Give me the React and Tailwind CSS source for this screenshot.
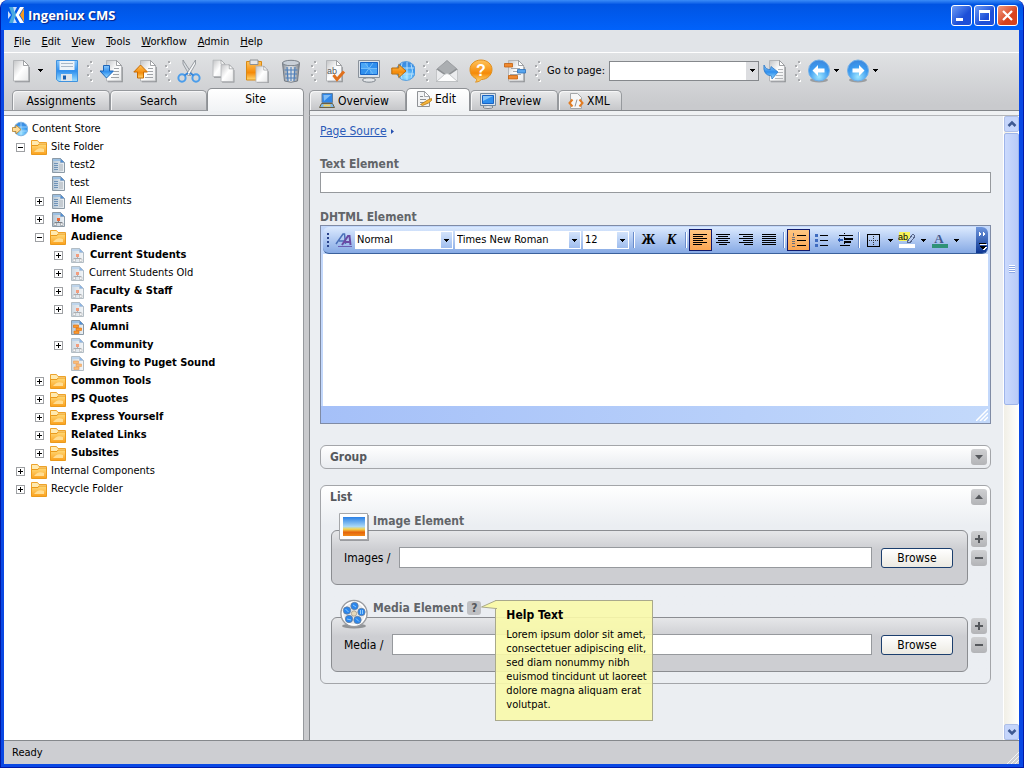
const menuItems = ["File", "Edit", "View", "Tools", "Workflow", "Admin", "Help"];

const treeItems = [
    { label: "Content Store", depth: 0, icon: "globe" },
    { label: "Site Folder", depth: 1, icon: "folder", toggle: "-" },
    { label: "test2", depth: 2, icon: "page" },
    { label: "test", depth: 2, icon: "page" },
    { label: "All Elements", depth: 2, icon: "page", toggle: "+" },
    { label: "Home", depth: 2, icon: "site", toggle: "+", bold: true },
    { label: "Audience", depth: 2, icon: "folder", toggle: "-", bold: true },
    { label: "Current Students", depth: 3, icon: "siteFaded", toggle: "+", bold: true },
    { label: "Current Students Old", depth: 3, icon: "siteFaded", toggle: "+" },
    { label: "Faculty & Staff", depth: 3, icon: "siteFaded", toggle: "+", bold: true },
    { label: "Parents", depth: 3, icon: "siteFaded", toggle: "+", bold: true },
    { label: "Alumni", depth: 3, icon: "component", bold: true },
    { label: "Community", depth: 3, icon: "siteFaded", toggle: "+", bold: true },
    { label: "Giving to Puget Sound", depth: 3, icon: "componentFaded", bold: true },
    { label: "Common Tools", depth: 2, icon: "folder", toggle: "+", bold: true },
    { label: "PS Quotes", depth: 2, icon: "folder", toggle: "+", bold: true },
    { label: "Express Yourself", depth: 2, icon: "folder", toggle: "+", bold: true },
    { label: "Related Links", depth: 2, icon: "folder", toggle: "+", bold: true },
    { label: "Subsites", depth: 2, icon: "folder", toggle: "+", bold: true },
    { label: "Internal Components", depth: 1, icon: "folder", toggle: "+" },
    { label: "Recycle Folder", depth: 1, icon: "folder", toggle: "+" },
];

const depthPadding = ["pl-2", "pl-3", "pl-[31px]", "pl-[50px]"];

// Gradients shared by all of the icons
const IconDefs = () => (
    <svg className="absolute h-0 w-0" aria-hidden="true">
        <defs>
            <linearGradient id="paper" x1="0" y1="0" x2="1" y2="1">
                <stop offset="0" stopColor="#c3c4c6" />
                <stop offset="0.5" stopColor="#ffffff" />
                <stop offset="1" stopColor="#e6e7e8" />
            </linearGradient>
            <linearGradient id="smallPaper" x1="0" y1="0" x2="1" y2="0">
                <stop offset="0" stopColor="#b5c6d4" />
                <stop offset="1" stopColor="#eef2f5" />
            </linearGradient>
            <linearGradient id="blue" x1="0" y1="0" x2="0" y2="1">
                <stop offset="0" stopColor="#8cc8fb" />
                <stop offset="0.5" stopColor="#2f8fee" />
                <stop offset="1" stopColor="#9fe0ff" />
            </linearGradient>
            <linearGradient id="orange" x1="0" y1="0" x2="0" y2="1">
                <stop offset="0" stopColor="#ffc45c" />
                <stop offset="0.6" stopColor="#f58a08" />
                <stop offset="1" stopColor="#ffd873" />
            </linearGradient>
            <linearGradient id="folder" x1="0" y1="0" x2="0" y2="1">
                <stop offset="0" stopColor="#ffdb7a" />
                <stop offset="1" stopColor="#fba01c" />
            </linearGradient>
            <linearGradient id="steel" x1="0" y1="0" x2="1" y2="0">
                <stop offset="0" stopColor="#8b929b" />
                <stop offset="0.5" stopColor="#eef1f4" />
                <stop offset="1" stopColor="#7b828b" />
            </linearGradient>
            <linearGradient id="sunset" x1="0" y1="0" x2="0" y2="1">
                <stop offset="0" stopColor="#2a80e6" />
                <stop offset="0.5" stopColor="#a9d8f5" />
                <stop offset="0.64" stopColor="#f5d64e" />
                <stop offset="0.8" stopColor="#e5650c" />
                <stop offset="1" stopColor="#f08a1a" />
            </linearGradient>
            <radialGradient id="ball" cx="0.5" cy="0.8" r="0.8">
                <stop offset="0" stopColor="#9fe6ff" />
                <stop offset="0.6" stopColor="#3b9bf0" />
                <stop offset="1" stopColor="#3c86dc" />
            </radialGradient>
        </defs>
    </svg>
);

const Svg24 = ({ children }) => (
    <svg viewBox="0 0 24 24" className="h-6 w-6 shrink-0" fill="none" aria-hidden="true">{children}</svg>
);

const Sheet = ({ x = 0, y = 0 }) => (
    <g transform={`translate(${x} ${y})`}>
        <path d="M3 3h9l6 5v15H3z" fill="#5d6064" opacity=".6" transform="translate(.8 .3)" />
        <path d="M2.500 1.500h10l5 5v15.500h-15z" fill="url(#paper)" stroke="#b4b6b9" />
        <path d="M12.500 1.500v5h5z" fill="#fff" stroke="#8a8d91" strokeWidth=".8" />
    </g>
);

const toolIcons = {
    new: <Sheet />,
    save: (
        <>
            <path d="M1.500 1.500h21v21H4l-2.500-2z" fill="url(#blue)" stroke="#3f92df" />
            <path d="M4.500 2h15v9h-15z" fill="#eef3f8" />
            <path d="M6 4.500h12M6 7.500h12" stroke="#a9b8c8" />
            <path d="M6 15h11v7H6z" fill="#dfe5ea" />
            <path d="M8 16.500h3v4H8z" fill="#1a5fae" />
        </>
    ),
    checkin: (
        <>
            <Sheet x={5} />
            <path d="M15 9.500h5M15 12.500h5M14 15.500h6M12 18.500h8" stroke="#a0a3a7" />
            <path d="M4.500 6.500h6v5.500h4l-7 7-6.500-7h3.500z" fill="url(#blue)" stroke="#1c65b8" />
        </>
    ),
    checkout: (
        <>
            <Sheet x={5} />
            <path d="M15 9.500h5M15 12.500h5M14 15.500h6M12 18.500h8" stroke="#a0a3a7" />
            <path d="M7.500 6l7 7h-4v6h-6v-6H.800z" fill="url(#orange)" stroke="#c86a00" />
        </>
    ),
    cut: (
        <>
            <path d="M6 1l9 14-2 2-7-12z" fill="#d9dde1" stroke="#858b92" strokeWidth=".8" />
            <path d="M18.500 1l-9 14 2 2 7-12z" fill="#f6f7f8" stroke="#858b92" strokeWidth=".8" />
            <ellipse cx="5" cy="19" rx="3.600" ry="3.800" stroke="#4a9deb" strokeWidth="2" />
            <ellipse cx="19" cy="19" rx="3.600" ry="3.800" stroke="#4a9deb" strokeWidth="2" />
            <path d="M7.500 16.500l3.500-2.500M16.500 16.500L13 14" stroke="#3987da" strokeWidth="2" />
        </>
    ),
    copy: (
        <>
            <g transform="scale(.8)"><Sheet /></g>
            <g transform="translate(8 4.500) scale(.82)"><Sheet /></g>
        </>
    ),
    paste: (
        <>
            <path d="M1.500 2.500h15v18.500h-15z" fill="url(#orange)" stroke="#d98a14" />
            <path d="M5 1h8v4.500H5z" fill="#e4e6e8" stroke="#8c9094" />
            <g transform="translate(9 6) scale(.78)"><Sheet /></g>
        </>
    ),
    trash: (
        <>
            <path d="M3.500 4l2 18q6.500 2.500 13 0l2-18z" fill="url(#steel)" stroke="#757c85" />
            <ellipse cx="12" cy="4" rx="8.500" ry="2.700" fill="#c9d0d8" stroke="#7c838b" />
            <path d="M8 8l1 14M12 8v14M16 8l-1 14M5.500 11h13M6 15h12M6.500 19h11" stroke="#4f7fb8" strokeWidth="1.200" />
        </>
    ),
    spell: (
        <>
            <Sheet x={1} />
            <text x="4" y="15" fontSize="9" fill="#55585c" fontFamily="Liberation Sans, sans-serif">ab</text>
            <path d="M10.500 16l3.500 4.500 7-8" stroke="#e0701c" strokeWidth="3" />
        </>
    ),
    monitor: (
        <>
            <ellipse cx="12" cy="21" rx="6.500" ry="2.200" fill="#e3e6e9" stroke="#7f868d" />
            <path d="M1.500 1.500h21v17h-21z" fill="#dce3ea" stroke="#8a929b" />
            <path d="M3.500 3.500h17v12h-17z" fill="#2f8fee" stroke="#1763c4" />
            <path d="M4 4h7v5H4zM13 10h7v5h-7z" fill="#4ba6f6" />
            <path d="M8 4l8 11M16 4L8 15M4 9.500h16" stroke="#75bdf8" />
        </>
    ),
    publish: (
        <>
            <circle cx="15" cy="12" r="9.500" fill="url(#ball)" stroke="#5fa2de" />
            <path d="M7 9h16M7 15h16M16 3v18M11 4q-3 8 0 16M20 5q3 7 0 14" stroke="#bfe4fd" strokeWidth=".9" />
            <path d="M.800 9h7v-3.500l7.200 6.500-7.200 6.500V15h-7z" fill="url(#orange)" stroke="#b96a08" />
        </>
    ),
    mail: (
        <>
            <path d="M1.500 10.500L12 1.500l10.500 9v12h-21z" fill="#8e9194" stroke="#9da0a3" />
            <path d="M3 9.500l9-7.500 9 7.500-9 6.500z" fill="#abaeb1" />
            <path d="M1.500 10.500l8 5.500-8 6.500zM22.500 10.500l-8 5.500 8 6.500z" fill="#ebecee" />
            <path d="M1.500 22.500l8-7q2.500-2 5 0l8 7z" fill="#fdfdfd" stroke="#b8babd" strokeWidth=".7" />
        </>
    ),
    help: (
        <>
            <path d="M12 1c6 0 11 4 11 9.500S18 20.500 12.500 20.500c-1 .5-2 2.500-6 2.500 1.500-1 1.500-2 .5-3.500C3.500 18 1 15 1 10.500 1 5 6 1 12 1z" fill="url(#orange)" stroke="#e08f1c" />
            <text x="12" y="16.500" textAnchor="middle" fontSize="16" fontWeight="700" fill="#fff" fontFamily="Liberation Sans, sans-serif">?</text>
        </>
    ),
    diff: (
        <>
            <Sheet x={3} />
            <path d="M8 9.500h9M10 12.500h8M7 15.500h11" stroke="#a5a8ac" />
            <path d="M1.500 4.500h8v3.500h-8zM5.500 16.500h9v3.500h-9z" fill="#f08a30" stroke="#c25f0e" strokeWidth=".8" />
            <path d="M14.500 10.500h8v3.500h-8z" fill="#58a5ee" stroke="#2c70b8" strokeWidth=".8" />
        </>
    ),
    go: (
        <>
            <Sheet x={4} />
            <path d="M15 10.500h5M15 13.500h5M13 16.500h7M12 19.500h8" stroke="#b5b7ba" />
            <path d="M1 6q2 5 6.500 4.500l.500-3L15 13l-6 7-.500-3Q-.500 16 1 6z" fill="url(#blue)" stroke="#2c78c6" strokeWidth=".8" />
        </>
    ),
    back: (
        <>
            <ellipse cx="12" cy="21" rx="9" ry="2.500" fill="#75787c" opacity=".6" />
            <circle cx="12" cy="11.500" r="10.500" fill="url(#ball)" stroke="#6fb0ea" />
            <path d="M5.500 11.500L11 6v3.500h6.500v4H11V17z" fill="#fff" />
        </>
    ),
    forward: (
        <>
            <ellipse cx="12" cy="21" rx="9" ry="2.500" fill="#75787c" opacity=".6" />
            <circle cx="12" cy="11.500" r="10.500" fill="url(#ball)" stroke="#6fb0ea" />
            <path d="M18.500 11.500L13 6v3.500H6.500v4H13V17z" fill="#fff" />
        </>
    ),
};

const SmallPage = ({ faded, children }) => (
    <g opacity={faded ? 0.65 : 1}>
        <path d="M2.500 1.500h8l4 4v10h-12z" fill="url(#smallPaper)" stroke="#8c9aa6" />
        <path d="M3 2h7v2H3z" fill="#9cc0e2" />
        <path d="M10.500 1.500v4h4z" fill="#4f8fd8" stroke="#7f9ab6" strokeWidth=".6" />
        {children}
    </g>
);

const siteMap = (
    <>
        <path d="M8.500 9v2M5 13.500v-2h7v2" stroke="#7d8288" />
        <path d="M7 7h3v3H7z" fill="#ec6a3a" />
        <path d="M4 12h2.500v2.500H4zM10.500 12H13v2.500h-2.500z" fill="#f6f7f8" stroke="#868b91" strokeWidth=".6" />
    </>
);

const blocks = (
    <path d="M4.500 6h5v2.500h-5zM7 9h5.500v2.500H7zM5 12h5v2.500H5z" fill="#fb9a2c" stroke="#dd6d0c" strokeWidth=".6" />
);

const smallIcons = {
    globe: (
        <>
            <circle cx="9" cy="8" r="6.800" fill="url(#ball)" stroke="#7fb6e4" />
            <path d="M3 6h12M3 10h12M9 2v12" stroke="#bfe4fd" strokeWidth=".7" />
            <path d="M.500 6.500h3.500V4l5 4.500-5 4.500v-2.500H.500z" fill="#ffdc98" stroke="#b5802c" strokeWidth=".8" />
        </>
    ),
    folder: (
        <>
            <path d="M.500 5V1.500h6L8 3.500h7.500V7H.500z" fill="#ffeab0" stroke="#eda32c" />
            <path d="M.500 6.500H7l1-1.500h7.500v10.500H.500z" fill="url(#folder)" stroke="#ea9a1c" />
            <path d="M3 13q4-5.500 10-3v3z" fill="#ffdd92" />
        </>
    ),
    page: (
        <SmallPage>
            <path d="M4 6.500h4M4 8.500h4M4 10.500h4M4 12.500h4" stroke="#6f93b8" />
            <path d="M9 7h4v7H9z" fill="#c5ccd2" />
        </SmallPage>
    ),
    site: <SmallPage>{siteMap}</SmallPage>,
    siteFaded: <SmallPage faded>{siteMap}</SmallPage>,
    component: <SmallPage>{blocks}</SmallPage>,
    componentFaded: <SmallPage faded>{blocks}</SmallPage>,
    overview: (
        <>
            <path d="M3 .500h10.500v9H3z" fill="#2f86e8" stroke="#5f7fa0" />
            <path d="M4.500 2H12L5 8z" fill="#7fbcf6" />
            <path d="M2.500 10.500h11l2 4H.500z" fill="#7fb9ec" stroke="#6a6045" />
            <path d="M4.500 11.500h7v2h-7z" fill="#f7cf5c" />
        </>
    ),
    edit: (
        <>
            <path d="M1.500.500h7l5 5v10h-12z" fill="#f3f4f5" stroke="#8f9296" />
            <path d="M8.500.500v5h5z" fill="#fff" stroke="#8f9296" strokeWidth=".8" />
            <path d="M4 5.500h3M4 8.500h6M4 11.500h7" stroke="#8d9094" />
            <path d="M4.500 13.500l8-5 3-1v2l-3 2.500-6 2.500z" fill="#f8b53a" stroke="#b27a18" strokeWidth=".8" />
        </>
    ),
    preview: (
        <>
            <ellipse cx="8" cy="14" rx="5" ry="1.500" fill="#e3e6e9" stroke="#7f868d" />
            <path d="M.500.500h15v12H.500z" fill="#dde4eb" stroke="#7189a1" />
            <path d="M2.500 2.500h11v8h-11z" fill="#2f8fee" stroke="#1763c4" />
            <path d="M3 3h10l-10 5z" fill="#85c4fa" />
        </>
    ),
    xml: (
        <>
            <path d="M2.500.500h7l4 4v11h-11z" fill="#f7f7f8" stroke="#a5a7aa" />
            <path d="M4.500 6.500L1.500 10l3 3.500M11.500 6.500l3 3.500-3 3.500" stroke="#e27c22" strokeWidth="2" />
            <path d="M9 6.500l-2 7" stroke="#8f9296" />
        </>
    ),
};

const SmallIcon = ({ name }) => (
    <svg viewBox="0 0 16 16" className="h-4 w-4 shrink-0" fill="none" aria-hidden="true">{smallIcons[name]}</svg>
);

const Caret = () => (
    <svg viewBox="0 0 5 3" className="h-[3px] w-[5px] shrink-0" shapeRendering="crispEdges" aria-hidden="true">
        <path d="M0 0h5v1H4v1H3v1H2V2H1V1H0z" />
    </svg>
);

const CaretButton = ({ label }) => (
    <button type="button" aria-label={label} className="flex h-5 w-2.5 items-center justify-center"><Caret /></button>
);

const Grip = () => (
    <div className="mr-1.5 ml-2 flex h-5 w-1.5 flex-col justify-between">
        {[0, 1, 2, 3, 4].map((dot) => (
            <span key={dot} className="h-0.5 w-0.5 bg-[#a9abae] shadow-[1px_1px_0_#fff] odd:ml-[3px]" />
        ))}
    </div>
);

const ToolButton = ({ name, label }) => (
    <button type="button" aria-label={label}><Svg24>{toolIcons[name]}</Svg24></button>
);

const ToolGroup = ({ children }) => <div className="flex items-center gap-2.5">{children}</div>;

const TitleBar = () => (
    <header className="flex h-[30px] shrink-0 items-center rounded-t-lg bg-linear-to-b from-[#3a8cf8] via-[#0054e3] via-15% to-[#0162fb] pr-[5px] pl-[7px]">
        <svg viewBox="0 0 16 16" className="h-4 w-4" aria-hidden="true">
            <path d="M1 0h4l3.500 8L5 16H1l3-8z" fill="#4aa9e0" />
            <path d="M0 4l3 4-3 4zM5 0h4L6.500 5zM5 16h4l-2.500-5z" fill="#fff" opacity=".8" />
            <path d="M12 0h4l-5 8 5 8h-4L7.500 8z" fill="#fff" />
            <path d="M16 1v14l-4-7z" fill="#f59a1e" />
        </svg>
        <h1 className="ml-1 flex-1 font-['Open_Sans','Noto_Sans',sans-serif] text-[13px] font-bold text-white [text-shadow:1px_1px_1px_#0a1f80]">Ingeniux CMS</h1>
        <div className="flex gap-0.5">
            <button type="button" aria-label="Minimize" className="h-[21px] w-[21px] rounded-[3px] border border-white bg-linear-to-br from-[#6f9bf5] to-[#1d4fd8] to-60%">
                <svg viewBox="0 0 19 19" aria-hidden="true"><path d="M4 12h7v3H4z" fill="#fff" /></svg>
            </button>
            <button type="button" aria-label="Maximize" className="h-[21px] w-[21px] rounded-[3px] border border-white bg-linear-to-br from-[#6f9bf5] to-[#1d4fd8] to-60%">
                <svg viewBox="0 0 19 19" aria-hidden="true"><path d="M4 4h11v11H4zM5 7v7h9V7z" fill="#fff" fillRule="evenodd" /></svg>
            </button>
            <button type="button" aria-label="Close" className="h-[21px] w-[21px] rounded-[3px] border border-white bg-linear-to-br from-[#f0987c] to-[#d8421c] to-60%">
                <svg viewBox="0 0 19 19" aria-hidden="true"><path d="M5 5l9 9M14 5l-9 9" stroke="#fff" strokeWidth="2.200" /></svg>
            </button>
        </div>
    </header>
);

const MenuBar = () => (
    <nav className="flex h-[23px] shrink-0 items-center gap-[11px] border-b border-white bg-[#e1e4e8] pt-px pl-2.5">
        {menuItems.map((item) => (
            <button type="button" key={item}><u>{item[0]}</u>{item.slice(1)}</button>
        ))}
    </nav>
);

const Toolbar = () => (
    <div className="flex h-[35px] shrink-0 items-center pl-[7px]">
        <ToolButton name="new" label="New" />
        <CaretButton label="New options" />
        <div className="w-2.5" />
        <ToolButton name="save" label="Save" />
        <Grip />
        <ToolGroup>
            <ToolButton name="checkin" label="Check in" />
            <ToolButton name="checkout" label="Check out" />
        </ToolGroup>
        <Grip />
        <ToolGroup>
            <ToolButton name="cut" label="Cut" />
            <ToolButton name="copy" label="Copy" />
            <ToolButton name="paste" label="Paste" />
            <ToolButton name="trash" label="Delete" />
        </ToolGroup>
        <Grip />
        <ToolGroup>
            <ToolButton name="spell" label="Spelling" />
            <ToolButton name="monitor" label="Preview" />
            <ToolButton name="publish" label="Publish" />
        </ToolGroup>
        <Grip />
        <ToolGroup>
            <ToolButton name="mail" label="Mail" />
            <ToolButton name="help" label="Help" />
            <ToolButton name="diff" label="Compare" />
        </ToolGroup>
        <Grip />
        <label htmlFor="goto" className="w-[62px] whitespace-nowrap">Go to page:</label>
        <div className="relative h-5 w-[150px]">
            <select id="goto" className="h-full w-full appearance-none border border-[#85888c] bg-white"><option></option></select>
            <span className="pointer-events-none absolute inset-y-px right-px flex w-3 items-center justify-center bg-[#dcdde0]"><Caret /></span>
        </div>
        <div className="w-1" />
        <ToolButton name="go" label="Go" />
        <Grip />
        <div className="flex items-center">
            <ToolButton name="back" label="Back" />
            <CaretButton label="Back history" />
            <div className="w-[5px]" />
            <ToolButton name="forward" label="Forward" />
            <CaretButton label="Forward history" />
        </div>
    </div>
);

const Tab = ({ label, icon, active, width }) => (
    <button
        type="button"
        role="tab"
        aria-selected={!!active}
        className={`flex shrink-0 items-center gap-[3px] rounded-t-[5px] border border-b-0 text-xs ${width} ${icon ? "pl-[9px]" : "justify-center"} ${active
            ? "z-10 -mb-px h-[23px] border-[#8d9094] bg-linear-to-b from-white to-[#f1f3f5] pb-0.5"
            : "h-5 border-[#96999d] bg-linear-to-b from-[#e9eaeb] to-[#c6c7ca] shadow-[inset_1px_1px_0_#f6f6f7]"
            }`}
    >
        {icon && <SmallIcon name={icon} />}
        {label}
    </button>
);

const Toggle = ({ sign, label }) => (
    <button type="button" aria-label={`${sign === "+" ? "Expand" : "Collapse"} ${label}`} className="h-[9px] w-[9px]">
        <svg viewBox="0 0 9 9" shapeRendering="crispEdges" aria-hidden="true">
            <path d="M.500.500h8v8h-8z" fill="#fff" stroke="#9ea0a3" />
            <path d={sign === "+" ? "M2 4h5v1H2zM4 2h1v5H4z" : "M2 4h5v1H2z"} />
        </svg>
    </button>
);

const Sidebar = () => (
    <aside className="flex w-[300px] shrink-0 flex-col">
        <div role="tablist" className="flex h-[23px] items-end border-b border-[#96999d] pl-2">
            <Tab label="Assignments" width="w-[98px]" />
            <Tab label="Search" width="w-[97px]" />
            <Tab label="Site" width="flex-1" active />
        </div>
        <div className="h-1 shrink-0 border-r border-[#96999d] bg-[#eff1f3]" />
        <ul className="flex-1 border-t border-r border-[#96999d] bg-white pt-1">
            {treeItems.map((item) => (
                <li key={item.label} className={`flex h-[18px] items-center ${depthPadding[item.depth]}`}>
                    {item.depth > 0 && (
                        <span className="mr-1.5 flex w-[9px]">
                            {item.toggle && <Toggle sign={item.toggle} label={item.label} />}
                        </span>
                    )}
                    <SmallIcon name={item.icon} />
                    <span className={item.bold ? "ml-[5px] font-bold" : "ml-1"}>{item.label}</span>
                </li>
            ))}
        </ul>
    </aside>
);

const EditorSelect = ({ label, value, width }) => (
    <div className={`relative mr-0.5 h-[18px] bg-white ${width}`}>
        <select aria-label={label} className="h-full w-full appearance-none pl-0.5 text-black">
            <option>{value}</option>
        </select>
        <span className="pointer-events-none absolute inset-y-px right-px flex w-[11px] items-center justify-center bg-linear-to-b from-[#d3e3fb] to-[#9fbdee]"><Caret /></span>
    </div>
);

const EditorButton = ({ label, active, children }) => (
    <button
        type="button"
        aria-label={label}
        className={`flex h-[22px] w-[23px] items-center justify-center ${active ? "border border-[#101a6e] bg-linear-to-b from-[#ffc681] to-[#fba653]" : ""}`}
    >
        <svg viewBox="0 0 17 16" className="h-4 w-[17px]" fill="none" shapeRendering="crispEdges" aria-hidden="true">{children}</svg>
    </button>
);

const EditorSep = () => <span className="mx-0.5 h-4 w-0.5 border-r border-l border-r-white border-l-[#6a8ccb]" />;

const Editor = () => (
    <div className="border border-[#7f8ba5] bg-[#c3d8fb]">
        <div className="mx-0.5 mt-px flex h-[27px] items-center rounded-md border-b border-[#3b619c] bg-linear-to-b from-[#dbe9fe] to-[#86a9e4] pl-1">
            <svg viewBox="0 0 3 14" className="mr-[5px] h-3.5 w-[3px]" shapeRendering="crispEdges" aria-hidden="true">
                <path d="M0 0h2v2H0zM0 4h2v2H0zM0 8h2v2H0zM0 12h2v2H0z" fill="#27418a" />
            </svg>
            <button type="button" aria-label="Styles" className="mr-0.5 w-[18px] text-center">
                <svg viewBox="0 0 18 16" className="h-4 w-[18px]" aria-hidden="true">
                    <path d="M1 12L8 2h1.500l1 10M4 9h6" fill="none" stroke="#4a6fb8" strokeWidth="1.500" />
                    <path d="M7 13l6-9h1.500l1 9M9.500 10H15" fill="none" stroke="#6a4aa4" strokeWidth="2" />
                    <path d="M3 14.500h14" stroke="#6a5fb4" />
                </svg>
            </button>
            <EditorSelect label="Style" value="Normal" width="w-[98px]" />
            <EditorSelect label="Font" value="Times New Roman" width="w-[126px]" />
            <EditorSelect label="Size" value="12" width="w-[46px]" />
            <EditorSep />
            <button type="button" aria-label="Bold" className="h-[22px] w-[23px] font-['Liberation_Serif',serif] text-sm font-bold text-black">Ж</button>
            <button type="button" aria-label="Italic" className="h-[22px] w-[23px] font-['Liberation_Serif',serif] text-sm font-bold text-black italic">К</button>
            <EditorSep />
            <EditorButton label="Align left" active><path d="M1 2.500h14M1 4.500h10M1 6.500h14M1 8.500h10M1 10.500h14M1 12.500h9" stroke="#000" /></EditorButton>
            <EditorButton label="Align center"><path d="M1 2.500h14M3 4.500h10M1 6.500h14M3 8.500h10M1 10.500h14M4 12.500h8" stroke="#000" /></EditorButton>
            <EditorButton label="Align right"><path d="M1 2.500h14M5 4.500h10M1 6.500h14M5 8.500h10M1 10.500h14M6 12.500h9" stroke="#000" /></EditorButton>
            <EditorButton label="Justify"><path d="M1 2.500h14M1 4.500h14M1 6.500h14M1 8.500h14M1 10.500h14M1 12.500h14" stroke="#000" /></EditorButton>
            <EditorSep />
            <EditorButton label="Numbered list" active>
                <path d="M7 3.500h9M7 8.500h9M7 13.500h9" stroke="#000" />
                <path d="M3.500 1v3M2 5.500h3M2 7.500h3M2 9.500h3M2 11.500h3M2 14.500h3" stroke="#6b6f7c" />
            </EditorButton>
            <EditorButton label="Bulleted list">
                <path d="M7 3.500h8M7 8.500h8M7 13.500h8" stroke="#000" />
                <path d="M2 2h3v3H2zM2 7h3v3H2zM2 12h3v3H2z" fill="#3f6cc0" />
            </EditorButton>
            <EditorButton label="Indent">
                <path d="M3 3.500h14M4 13.500h10" stroke="#000" />
                <path d="M8 6h9v2H8zM8 9h7v2H8z" fill="#000" />
                <path d="M8.500 1v14" stroke="#000" strokeDasharray="1 1" />
                <path d="M1 8l3-3v2h3v2H4v2z" fill="#2c5cb5" />
            </EditorButton>
            <EditorSep />
            <EditorButton label="Borders">
                <path d="M2.500 2.500h12v12h-12z" stroke="#000" />
                <path d="M8.500 4v9M4 8.500h9" stroke="#333" strokeDasharray="1 1" />
            </EditorButton>
            <CaretButton label="Border options" />
            <EditorButton label="Highlight">
                <path d="M1 0h11v9H1z" fill="#f7f35b" />
                <text x="0" y="8" fontSize="9" fill="#000" fontFamily="Liberation Sans, sans-serif">ab</text>
                <path d="M9 10l6-8 2 2-5 7z" fill="#b9cdf0" stroke="#56658a" />
                <path d="M1 12h16v4H1z" fill="#fff" />
            </EditorButton>
            <CaretButton label="Highlight options" />
            <EditorButton label="Font color">
                <text x="8" y="11" textAnchor="middle" fontSize="13" fontWeight="700" fill="#44588c" fontFamily="Liberation Serif, serif">A</text>
                <path d="M1 12h16v4H1z" fill="#2f9277" />
            </EditorButton>
            <CaretButton label="Font color options" />
            <button type="button" aria-label="More buttons" className="ml-auto h-full w-3 rounded-r-md bg-linear-to-b from-[#6f96dd] to-[#0b3592]">
                <svg viewBox="0 0 12 26" shapeRendering="crispEdges" aria-hidden="true">
                    <path d="M3 5l3 2-3 2zM7 5l3 2-3 2z" fill="#fff" />
                    <path d="M4 17h7v1H4zM4 20h7l-3 4z" fill="#fff" />
                    <path d="M3 16h7v1H3zM3 19h7l-3.500 3.500z" fill="#000" />
                </svg>
            </button>
        </div>
        <textarea aria-labelledby="dhtml-label" className="mx-0.5 block h-[152px] w-[calc(100%-4px)] resize-none bg-white" />
        <div className="flex h-[17px] items-end justify-end bg-linear-to-r from-[#a5c0f8] to-[#c3d9fb] p-0.5">
            <svg viewBox="0 0 12 12" className="h-3 w-3" stroke="#fff" strokeWidth="1.500" aria-hidden="true"><path d="M0 12L12 0M4 12l8-8M8 12l4-4" /></svg>
        </div>
    </div>
);

const SquareButton = ({ label, d }) => (
    <button type="button" aria-label={label} className="h-4 w-4 shrink-0 rounded-[3px] bg-linear-to-b from-[#cfd0d2] to-[#b3b4b7]">
        <svg viewBox="0 0 16 16" fill="#55585c" aria-hidden="true"><path d={d} /></svg>
    </button>
);

const ImageIcon = () => (
    <svg viewBox="0 0 30 30" className="h-[30px] w-[30px]" fill="none" aria-hidden="true">
        <path d="M1 3h29v26H1z" fill="#6f7276" opacity=".6" />
        <path d="M.500 1.500h28v26H.500z" fill="#fff" stroke="#a5a7aa" />
        <path d="M4 5h22v19H4z" fill="url(#sunset)" />
    </svg>
);

const MediaIcon = () => (
    <svg viewBox="0 0 30 30" className="h-[30px] w-[30px]" fill="none" aria-hidden="true">
        <ellipse cx="15" cy="27" rx="12" ry="2.500" fill="#5f6266" opacity=".6" />
        <circle cx="15" cy="14.500" r="13" fill="#e9ebee" stroke="#9b9da1" strokeWidth="1.500" />
        <circle cx="15" cy="14.500" r="11.500" stroke="#fff" strokeWidth="1.500" />
        <g fill="#2a86ee" stroke="#6b7a8c" strokeWidth=".7">
            <circle cx="15.500" cy="7" r="3.700" />
            <circle cx="22.500" cy="13" r="3.700" />
            <circle cx="18.500" cy="21" r="3.700" />
            <circle cx="10" cy="20" r="3.700" />
            <circle cx="8" cy="11.500" r="3.700" />
        </g>
        <path d="M14 6l3 2M21.500 11v4M23.500 11v4M17 19.500l3 3M8 20l4 1M6.500 10l3 3" stroke="#8ccafb" />
        <circle cx="15" cy="14.500" r="2.700" fill="#e6d9bc" stroke="#9a9184" strokeWidth=".7" />
    </svg>
);

const HelpNote = () => (
    <div className="absolute top-0 left-full z-20 ml-3.5 w-[158px] border border-[#a9a98c] bg-[#fafaaa]/90 pt-1.5 pb-2 pl-2.5 whitespace-nowrap text-black">
        <svg viewBox="0 0 16 9" className="absolute -top-px -left-[15px] h-[9px] w-4" aria-hidden="true">
            <path d="M16 .500h-1L.500 7l14.500 1.500h1" fill="#fafaaa" stroke="#a9a98c" />
        </svg>
        <h3 className="text-xs font-bold">Help Text</h3>
        <p className="mt-[5px] leading-[14px]">
            Lorem ipsum dolor sit amet,<br />
            consectetuer adipiscing elit,<br />
            sed diam nonummy nibh<br />
            euismod tincidunt ut laoreet<br />
            dolore magna aliquam erat<br />
            volutpat.
        </p>
    </div>
);

const FileField = ({ id, title, icon, prefix, help }) => (
    <div className="pl-2.5">
        <div className="relative z-10 -mb-3 ml-2 flex h-[30px] w-fit items-start gap-1">
            {icon}
            <span className="pt-px text-xs font-bold text-[#626569]">{title}</span>
            {help && (
                <div className="flex pt-px">
                    <button type="button" aria-label="Help" className="mt-px h-3.5 w-3.5 rounded-[3px] bg-[#bfc0c3] text-xs leading-[14px] font-bold text-[#55585c]">?</button>
                    <div className="relative"><HelpNote /></div>
                </div>
            )}
        </div>
        <div className="flex gap-[3px]">
            <div className="flex h-[55px] flex-1 items-center rounded-md border border-[#8b8d91] bg-linear-to-b from-[#e6e7e9] to-[#cdced2] to-35% pr-3.5 pl-3">
                <label htmlFor={id} className="mr-2 text-xs text-black">{prefix}</label>
                <input id={id} type="text" className="h-[21px] min-w-0 flex-1 border border-[#96999d] bg-white px-1" />
                <button type="button" className="ml-[9px] h-5 w-[72px] rounded-[3px] border border-[#1c3f6e] bg-linear-to-b from-white to-[#eceae2] text-xs leading-[18px] text-black">Browse</button>
            </div>
            <div className="flex flex-col gap-[3px] pt-px">
                <SquareButton label={`Add ${title}`} d="M7 4h2v3h3v2H9v3H7V9H4V7h3z" />
                <SquareButton label={`Remove ${title}`} d="M4 7h8v2H4z" />
            </div>
        </div>
    </div>
);

const EditForm = () => (
    <form className="min-w-0 flex-1 px-2.5 pt-[7px] pr-3 text-[#55585c]">
        <a href="#source" className="flex h-4 w-fit items-center text-xs text-[#2a5ab8]">
            <span className="underline">Page Source</span>
            <svg viewBox="0 0 3 5" className="ml-1 h-[5px] w-[3px]" fill="#2450b0" aria-hidden="true"><path d="M0 0l3 2.500L0 5z" /></svg>
        </a>
        <label htmlFor="text-element" className="mt-[17px] block h-4 text-xs font-bold text-[#626569]">Text Element</label>
        <input id="text-element" type="text" className="block h-[21px] w-full border border-[#96999d] bg-white px-1" />
        <div id="dhtml-label" className="mt-4 h-4 text-xs font-bold text-[#626569]">DHTML Element</div>
        <Editor />
        <section className="mt-[21px] flex h-6 items-center justify-between rounded-md border border-[#a3a5a9] bg-linear-to-b from-white to-[#e9ecf0] pr-[3px] pl-[9px]">
            <h2 className="text-xs font-bold">Group</h2>
            <SquareButton label="Expand Group" d="M4 6h8l-4 4.500z" />
        </section>
        <section className="mt-4 rounded-md border border-[#a3a5a9] bg-linear-to-b from-white to-[#ebeef2] to-20% pr-[3px] pb-[11px]">
            <div className="flex h-[22px] items-center justify-between pl-[9px]">
                <h2 className="text-xs font-bold">List</h2>
                <SquareButton label="Collapse List" d="M4 10h8L8 5.500z" />
            </div>
            <div className="mt-1 flex flex-col gap-3.5">
                <FileField id="images" title="Image Element" icon={<ImageIcon />} prefix="Images /" />
                <FileField id="media" title="Media Element" icon={<MediaIcon />} prefix="Media /" help />
            </div>
        </section>
    </form>
);

const ScrollButton = ({ label, d }) => (
    <button type="button" aria-label={label} className="h-4 w-full shrink-0 rounded-[2px] border border-[#aebfe8] bg-[#c5d5fb]">
        <svg viewBox="0 0 14 14" className="mx-auto h-3.5 w-3.5" fill="none" stroke="#3f5a92" strokeWidth="2.500" aria-hidden="true"><path d={d} /></svg>
    </button>
);

const ScrollBar = () => (
    <div className="flex w-4 shrink-0 flex-col gap-px border-l border-white bg-linear-to-r from-[#f1efe6] to-white">
        <ScrollButton label="Scroll up" d="M3.500 9L7 5.500 10.500 9" />
        <div className="flex h-[272px] items-center justify-center rounded-[2px] border border-[#9fb5ea] bg-linear-to-r from-[#cbdafd] to-[#b9cbf8]">
            <span className="h-2 w-1.5 bg-[repeating-linear-gradient(#fff_0_1px,#8ca7e5_1px_2px)]" />
        </div>
        <div className="flex-1" />
        <ScrollButton label="Scroll down" d="M3.500 5L7 8.500 10.500 5" />
    </div>
);

const MainPane = () => (
    <main className="flex min-w-0 flex-1 flex-col">
        <div role="tablist" className="flex h-[23px] items-end border-b border-[#85888c]">
            <Tab label="Overview" icon="overview" width="w-[97px]" />
            <Tab label="Edit" icon="edit" width="w-16" active />
            <Tab label="Preview" icon="preview" width="w-[88px]" />
            <Tab label="XML" icon="xml" width="w-16" />
        </div>
        <div className="h-1 shrink-0 border-l border-[#85888c] bg-[#eff1f3]" />
        <div className="flex min-h-0 flex-1 border-t border-l border-t-[#b3b5b9] border-l-[#85888c] bg-[#ebeef2]">
            <EditForm />
            <ScrollBar />
        </div>
    </main>
);

const App = () => (
    <div className="flex h-screen flex-col rounded-t-lg border-r border-b border-l border-[#0019a8] bg-[#0a48e4] font-['DejaVu_Sans_Condensed','DejaVu_Sans',sans-serif] text-[11px] leading-4 text-black">
        <IconDefs />
        <TitleBar />
        <div className="flex min-h-0 flex-1 flex-col border-r-4 border-b-3 border-l-3 border-[#0a48e4] bg-[#c9cacd]">
            <MenuBar />
            <div className="flex min-h-0 flex-1 flex-col bg-linear-to-b from-[#e0e2e4] to-[#c9cacd] to-[52px]">
                <Toolbar />
                <div className="flex min-h-0 flex-1 gap-[5px]">
                    <Sidebar />
                    <MainPane />
                </div>
            </div>
            <footer className="flex h-6 shrink-0 items-center justify-between border-t border-[#85888c] bg-[#cdced2] pl-2">
                <span>Ready</span>
                <svg viewBox="0 0 12 12" className="mt-auto h-3 w-3" stroke="#f4f4f5" aria-hidden="true"><path d="M0 12L12 0M4 12l8-8M8 12l4-4" /></svg>
            </footer>
        </div>
    </div>
);

export default App;
